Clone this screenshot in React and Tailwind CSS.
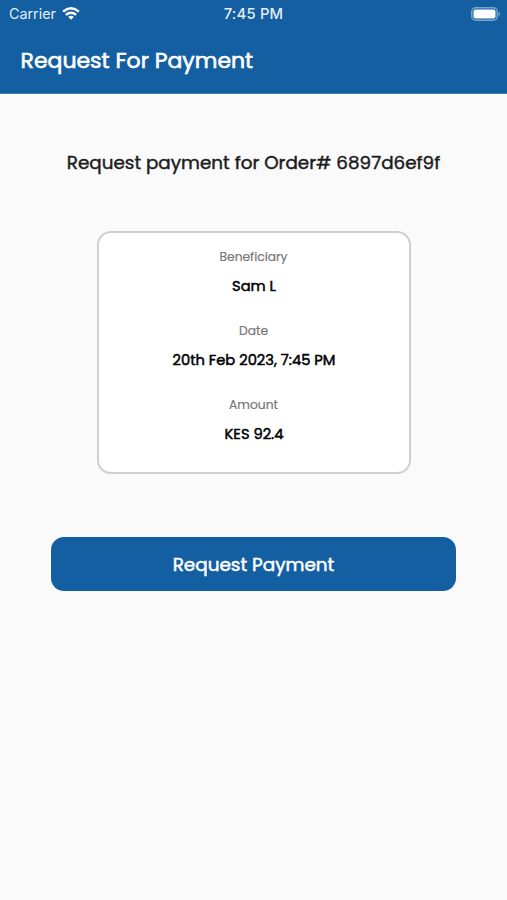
import React from 'react';

const details = [
  { label: 'Beneficiary', value: 'Sam L' },
  { label: 'Date', value: '20th Feb 2023, 7:45 PM' },
  { label: 'Amount', value: 'KES 92.4' },
];

const App = () => {
  return (
    <div className="flex h-screen flex-col bg-[#fafafa] font-['Poppins','Inter',sans-serif] text-black">
      <header className="h-[94px] border-b border-[#3d7bb3] bg-[#145fa2] text-white">
        {/* Status bar */}
        <div className="grid h-7 grid-cols-3 items-center pl-[9px] pr-[6px] font-['Inter',sans-serif] text-sm">
          <div className="flex items-center gap-1.5 text-[14.3px] text-[#e3edf5]">
            <span>Carrier</span>
            <svg width="18" height="13" viewBox="0 0 19 14" fill="none" stroke="white" strokeWidth="2.7">
              <path d="M1 5Q9.5-2.2 18 5M4 8.5Q9.5 4 15 8.5" />
              <path d="M6.5 10.8Q9.5 8.2 12.5 10.8L9.5 13.8Z" fill="white" stroke="none" />
            </svg>
          </div>
          <div className="-ml-[3px] pt-0.5 text-center text-[14.8px] font-medium tracking-[0.2px] text-[#e3edf5]">7:45 PM</div>
          <svg className="justify-self-end" width="30" height="14" viewBox="0 0 30 14" fill="none">
            <rect x=".75" y=".75" width="25.5" height="12.5" rx="4" stroke="#79a6cd" strokeWidth="1.5" />
            <rect x="2.5" y="2.5" width="22" height="9" rx="2" fill="white" />
            <path d="M27.5 4.5v5q3-2.5 0-5" fill="#79a6cd" />
          </svg>
        </div>
        <h1 className="pl-[20.5px] pt-[21px] text-[22px] leading-6 font-normal [-webkit-text-stroke:0.6px]">Request For Payment</h1>
      </header>

      <main className="flex flex-col items-center">
        <h2 className="mt-[55px] text-[18.35px] leading-7 font-normal text-[#1c1c1c] [-webkit-text-stroke:0.45px]">Request payment for Order# 6897d6ef9f</h2>
        <section className="mt-[54px] h-[243px] w-[314px] rounded-[14px] border-2 border-[#cfcfcf] bg-white pt-[9px] text-center">
          {details.map((item) => (
            <div key={item.label} className="h-[74px]">
              <div className="text-[12.3px] leading-[30px] text-[#777777] [-webkit-text-stroke:0.2px]">{item.label}</div>
              <div className="-mt-px pl-px text-[14.7px] leading-[30px] [-webkit-text-stroke:0.5px]">{item.value}</div>
            </div>
          ))}
        </section>
        <button className="mt-[63px] h-[54px] w-[405px] rounded-[13px] bg-[#145fa2] pt-px text-[18.4px] text-white [-webkit-text-stroke:0.5px]">Request Payment</button>
      </main>
    </div>
  );
};

export default App;
